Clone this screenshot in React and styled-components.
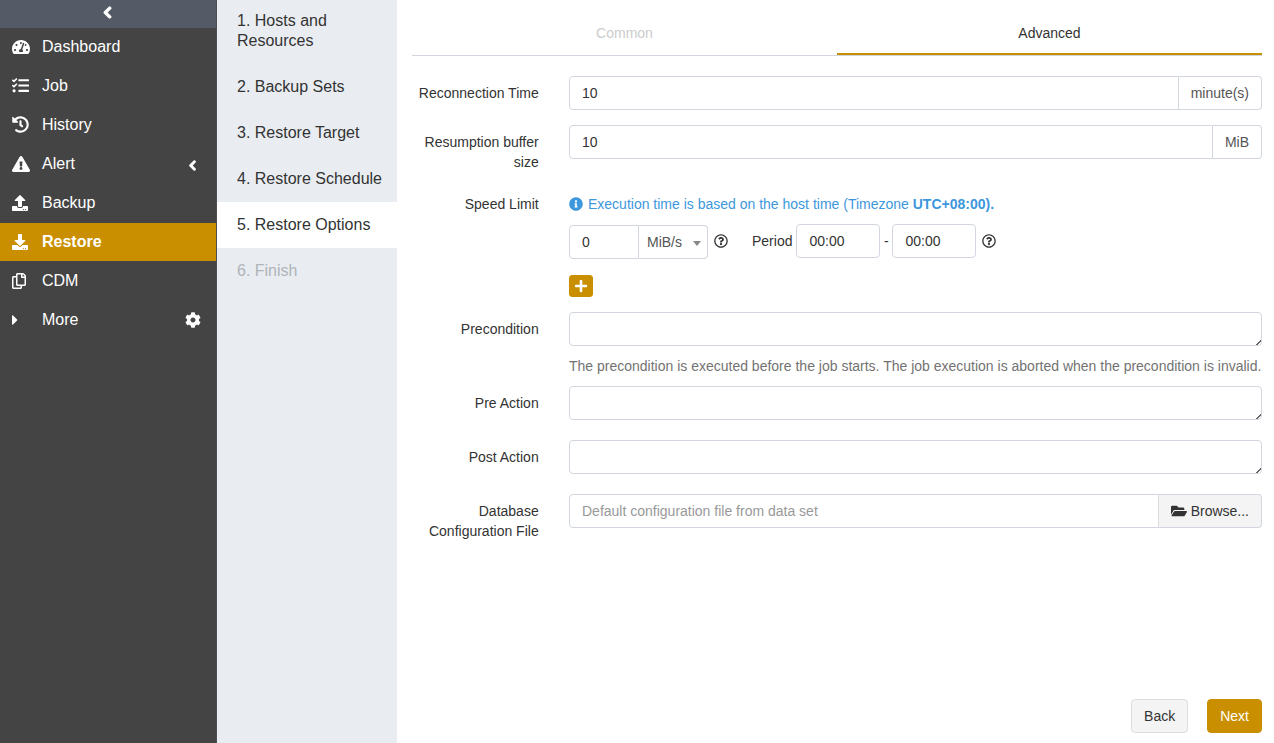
import React from 'react'
import styled, { createGlobalStyle } from 'styled-components'
import {
  FaChevronLeft, FaTachometerAlt, FaTasks, FaHistory, FaExclamationTriangle, FaUpload, FaDownload,
  FaRegCopy, FaCaretRight, FaCog, FaInfoCircle, FaRegQuestionCircle, FaPlus, FaFolderOpen,
} from 'react-icons/fa'

const GOLD = '#c98f00'
const BORDER = '#d2d6de'

const GlobalStyle = createGlobalStyle`
  * { box-sizing: border-box; }
  html, body { margin: 0; padding: 0; height: 100%; }
  body { font-family: "Liberation Sans", Arial, sans-serif; font-size: 14px; line-height: 20px; color: #333; background: #fff; }
`

const Page = styled.div`
  display: flex;
  height: 743px;
  overflow: hidden;
`

const Sidebar = styled.nav`
  width: 217px;
  flex: none;
  background: #444;
  border-right: 1px solid #4e4e4e;
`

const Collapse = styled.div`
  height: 28px;
  background: #555b66;
  color: #fff;
  display: flex;
  align-items: center;
  justify-content: center;
  font-size: 13px;
  padding: 0 2px 3px 0;
  svg { stroke: currentColor; stroke-width: 50px; }
`

const NavItem = styled.div`
  height: 38px;
  margin-bottom: 1px;
  display: flex;
  align-items: center;
  padding: 0 15px 1px 12px;
  color: #fff;
  font-size: 16px;
  font-weight: ${p => (p.$active ? 700 : 400)};
  background: ${p => (p.$active ? GOLD : 'transparent')};
`

const NavIcon = styled.span`
  width: 30px;
  flex: none;
  display: flex;
  align-items: center;
  font-size: ${p => p.$size || 18}px;
  svg { margin-left: ${p => p.$shift || 0}px; }
`

const NavEnd = styled.span`
  margin-left: auto;
  margin-right: ${p => p.$right || 0}px;
  display: flex;
  align-items: center;
  font-size: ${p => p.$size || 12}px;
`

const AlertChevron = styled(NavEnd)`
  padding-top: 3px;
  svg { stroke: currentColor; stroke-width: 50px; }
`

const Steps = styled.div`
  width: 180px;
  flex: none;
  background: #e9edf2;
`

const Step = styled.div`
  padding: 13px 15px 13px 20px;
  font-size: 16px;
  line-height: 20px;
  color: ${p => (p.$disabled ? '#b0b3b8' : '#333')};
  background: ${p => (p.$active ? '#fff' : 'transparent')};
  &:first-child { padding-top: 11px; }
`

const Main = styled.main`
  flex: 1;
  min-width: 0;
  padding: 0 12px 10px 15px;
  display: flex;
  flex-direction: column;
`

const Tabs = styled.div`
  display: flex;
  height: 56px;
  border-bottom: 1px solid ${BORDER};
  margin-bottom: 20px;
`

const Tab = styled.div`
  flex: 1;
  height: 55px;
  padding-top: 23px;
  text-align: center;
  color: ${p => (p.$active ? '#333' : '#ccc')};
  border-bottom: ${p => (p.$active ? `2px solid ${GOLD}` : 'none')};
`

const Row = styled.div`
  display: flex;
  margin-bottom: ${p => p.$gap ?? 15}px;
`

const Label = styled.label`
  width: 141.7px;
  flex: none;
  padding: 7px 15px 0 0;
  text-align: right;
  margin-right: 15.3px;
`

const Field = styled.div`
  flex: 1;
  min-width: 0;
`

const InputGroup = styled.div`
  display: flex;
  height: 34px;
`

const TextInput = styled.input`
  flex: ${p => (p.$width ? 'none' : 1)};
  width: ${p => (p.$width ? `${p.$width}px` : 'auto')};
  min-width: 0;
  height: 34px;
  padding: 6px 12px;
  font: inherit;
  color: #333;
  background: #fff;
  border: 1px solid ${BORDER};
  border-radius: ${p => p.$radius || '4px'};
  outline: none;
  &::placeholder { color: #999; opacity: 1; }
`

const Addon = styled.span`
  flex: none;
  height: 34px;
  padding: 6px 12px;
  color: #555;
  background: #fff;
  border: 1px solid ${BORDER};
  border-left: none;
  border-radius: 0 4px 4px 0;
`

const Info = styled.div`
  padding-top: 7px;
  margin-bottom: 10px;
  color: #3c97dd;
  display: flex;
  align-items: center;
  svg { margin-right: 5px; font-size: 14px; }
`

const Limits = styled.div`
  display: flex;
  align-items: center;
  height: 34px;
  margin-bottom: 17px;
`

const UnitInput = styled(TextInput)`
  margin-top: 1px;
`

const UnitSelect = styled.div`
  width: 69px;
  height: 34px;
  margin-top: 1px;
  padding: 6px 0 6px 8px;
  color: #555;
  border: 1px solid ${BORDER};
  border-left: none;
  border-radius: 0 4px 4px 0;
  position: relative;
  &::after {
    content: '';
    position: absolute;
    right: 6px;
    top: 15px;
    border-left: 4px solid transparent;
    border-right: 4px solid transparent;
    border-top: 5px solid #888;
  }
`

const Help = styled.span`
  display: flex;
  color: #333;
  font-size: 14px;
  margin-left: 6px;
`

const PeriodLabel = styled.span`
  margin-left: 24px;
  margin-right: 4px;
`

const Dash = styled.span`
  width: 12px;
  text-align: center;
`

const AddButton = styled.button`
  display: flex;
  align-items: center;
  justify-content: center;
  width: 24px;
  height: 22px;
  padding: 0;
  color: #fff;
  font-size: 14px;
  background: ${GOLD};
  border: 1px solid ${GOLD};
  border-radius: 3px;
`

const TextArea = styled.textarea`
  display: block;
  width: 100%;
  height: 34px;
  padding: 6px 12px;
  font: inherit;
  color: #333;
  border: 1px solid ${BORDER};
  border-radius: 4px;
  outline: none;
  &::-webkit-resizer {
    background: linear-gradient(135deg, transparent 50%, #666 50% 72%, transparent 72%) no-repeat right 0 bottom 0 / 6px 6px;
  }
`

const HelpText = styled.div`
  margin-top: 10px;
  color: #737373;
  white-space: nowrap;
`

const BrowseButton = styled.button`
  flex: none;
  display: flex;
  align-items: center;
  gap: 4px;
  height: 34px;
  padding: 6px 12px;
  font: inherit;
  color: #333;
  background: #f4f4f4;
  border: 1px solid ${BORDER};
  border-left: 1px solid #ddd;
  margin-left: -1px;
  border-radius: 0 4px 4px 0;
  svg { font-size: 16px; }
`

const Footer = styled.div`
  margin-top: auto;
  display: flex;
  justify-content: flex-end;
  gap: 19px;
`

const FooterButton = styled.button`
  height: 34px;
  padding: 6px 12px;
  font: inherit;
  color: ${p => (p.$primary ? '#fff' : '#333')};
  background: ${p => (p.$primary ? GOLD : '#f4f4f4')};
  border: 1px solid ${p => (p.$primary ? GOLD : '#ddd')};
  border-radius: 4px;
`

const navItems = [
  { label: 'Dashboard', icon: <FaTachometerAlt />, size: 18 },
  { label: 'Job', icon: <FaTasks />, size: 17 },
  { label: 'History', icon: <FaHistory />, size: 17 },
  { label: 'Alert', icon: <FaExclamationTriangle />, size: 18, end: <AlertChevron $size={11} $right={3}><FaChevronLeft /></AlertChevron> },
  { label: 'Backup', icon: <FaUpload />, size: 16 },
  { label: 'Restore', icon: <FaDownload />, size: 16, active: true },
  { label: 'CDM', icon: <FaRegCopy />, size: 16, shift: -1 },
  { label: 'More', icon: <FaCaretRight />, size: 16, shift: -5, end: <NavEnd $size={16}><FaCog /></NavEnd> },
]

const steps = ['1. Hosts and Resources', '2. Backup Sets', '3. Restore Target', '4. Restore Schedule', '5. Restore Options', '6. Finish']

export default function App() {
  return (
    <Page>
      <GlobalStyle />
      <Sidebar>
        <Collapse><FaChevronLeft /></Collapse>
        {navItems.map(item => (
          <NavItem key={item.label} $active={item.active}>
            <NavIcon $size={item.size} $shift={item.shift}>{item.icon}</NavIcon>
            {item.label}
            {item.end}
          </NavItem>
        ))}
      </Sidebar>
      <Steps>
        {steps.map((s, i) => (
          <Step key={s} $active={i === 4} $disabled={i === 5}>{s}</Step>
        ))}
      </Steps>
      <Main>
        <Tabs>
          <Tab>Common</Tab>
          <Tab $active>Advanced</Tab>
        </Tabs>
        <Row>
          <Label>Reconnection Time</Label>
          <Field>
            <InputGroup>
              <TextInput defaultValue="10" $radius="4px 0 0 4px" />
              <Addon>minute(s)</Addon>
            </InputGroup>
          </Field>
        </Row>
        <Row>
          <Label>Resumption buffer size</Label>
          <Field>
            <InputGroup>
              <TextInput defaultValue="10" $radius="4px 0 0 4px" />
              <Addon>MiB</Addon>
            </InputGroup>
          </Field>
        </Row>
        <Row>
          <Label>Speed Limit</Label>
          <Field>
            <Info>
              <FaInfoCircle />
              <span>Execution time is based on the host time (Timezone <b>UTC+08:00).</b></span>
            </Info>
            <Limits>
              <UnitInput defaultValue="0" $width={70} $radius="4px 0 0 4px" />
              <UnitSelect>MiB/s</UnitSelect>
              <Help><FaRegQuestionCircle /></Help>
              <PeriodLabel>Period</PeriodLabel>
              <TextInput defaultValue="00:00" $width={84} />
              <Dash>-</Dash>
              <TextInput defaultValue="00:00" $width={84} />
              <Help><FaRegQuestionCircle /></Help>
            </Limits>
            <AddButton><FaPlus /></AddButton>
          </Field>
        </Row>
        <Row $gap={10}>
          <Label>Precondition</Label>
          <Field>
            <TextArea />
            <HelpText>The precondition is executed before the job starts. The job execution is aborted when the precondition is invalid.</HelpText>
          </Field>
        </Row>
        <Row $gap={20}>
          <Label>Pre Action</Label>
          <Field><TextArea /></Field>
        </Row>
        <Row $gap={20}>
          <Label>Post Action</Label>
          <Field><TextArea /></Field>
        </Row>
        <Row>
          <Label>Database Configuration File</Label>
          <Field>
            <InputGroup>
              <TextInput placeholder="Default configuration file from data set" $radius="4px 0 0 4px" />
              <BrowseButton><FaFolderOpen /> Browse...</BrowseButton>
            </InputGroup>
          </Field>
        </Row>
        <Footer>
          <FooterButton>Back</FooterButton>
          <FooterButton $primary>Next</FooterButton>
        </Footer>
      </Main>
    </Page>
  )
}
